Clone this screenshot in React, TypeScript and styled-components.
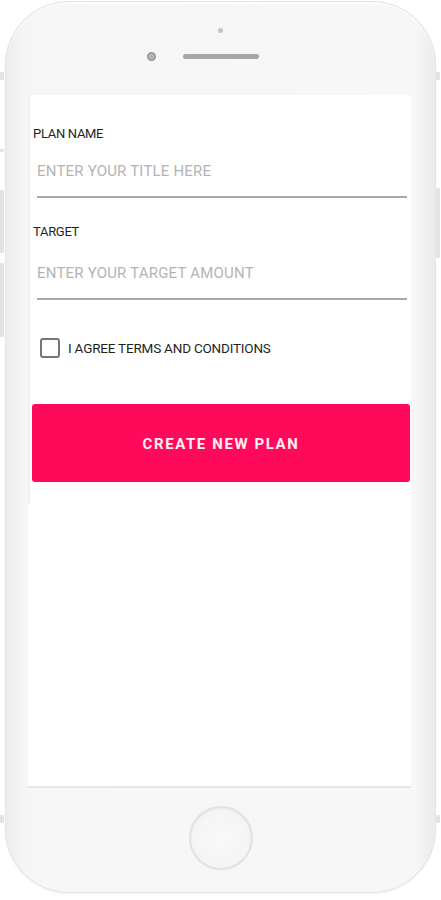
import React, { useState } from "react";
import styled, { createGlobalStyle } from "styled-components";

const GlobalStyle = createGlobalStyle`
    html, body {
        margin: 0;
        padding: 0;
        background: #ffffff;
        font-family: Roboto, "Noto Sans", "Liberation Sans", sans-serif;
    }
`;

// --- Phone frame ---
const Page = styled.div`
    width: 441px;
    height: 900px;
    padding: 1px 0 0 5px;
    box-sizing: border-box;
`;

const Phone = styled.div`
    position: relative;
    width: 431px;
    height: 892px;
    box-sizing: border-box;
    border-radius: 64px;
    background: linear-gradient(90deg, #ececec 0%, #f6f6f6 5%, #f7f7f7 95%, #eaeaea 100%);
    box-shadow: inset 0 0 0 1px #e4e4e4, inset 0 2px 3px #ffffff, 0 1px 2px rgba(0, 0, 0, 0.06);
    display: flex;
    flex-direction: column;
    align-items: center;
`;

// side buttons / antenna marks sit on the frame edge
const SideMark = styled.div<{ $side: "left" | "right"; $top: number; $h: number }>`
    position: absolute;
    ${({ $side }) => ($side === "left" ? "left: -5px;" : "right: -4px;")}
    top: ${({ $top }) => $top}px;
    width: 4px;
    height: ${({ $h }) => $h}px;
    background: #e3e3e3;
    border-radius: 1px;
`;

const TopBezel = styled.div`
    height: 94px;
    width: 100%;
    display: flex;
    flex-direction: column;
    align-items: center;
    flex-shrink: 0;
`;

const Sensor = styled.div`
    width: 5px;
    height: 5px;
    margin-top: 27px;
    border-radius: 50%;
    background: #c4c4c4;
`;

const EarRow = styled.div`
    display: flex;
    align-items: center;
    gap: 27px;
    margin-top: 19px;
    padding-right: 36px;
`;

const Camera = styled.div`
    width: 9px;
    height: 9px;
    box-sizing: border-box;
    border-radius: 50%;
    background: #a9a9a9;
    border: 2px solid #9a9a9a;
    box-shadow: inset 0 0 0 1px #c9c9c9;
`;

const Speaker = styled.div`
    width: 76px;
    height: 5px;
    border-radius: 3px;
    background: #a6a6a6;
`;

const Screen = styled.div`
    width: 383px;
    height: 693px;
    margin-left: -2px;
    background: #ffffff;
    border-bottom: 2px solid #e6e6e6;
    box-sizing: border-box;
    flex-shrink: 0;
`;

const BottomBezel = styled.div`
    flex: 1;
    display: flex;
    justify-content: center;
    padding-top: 18px;
`;

const HomeButton = styled.div`
    width: 64px;
    height: 64px;
    box-sizing: border-box;
    border-radius: 50%;
    border: 2px solid #e2e2e2;
    background: radial-gradient(circle at 50% 50%, #f9f9f9 0%, #f2f2f2 100%);
    box-shadow: inset 0 1px 2px rgba(0, 0, 0, 0.05);
`;

// --- Form ---
const Form = styled.form`
    display: flex;
    flex-direction: column;
    padding: 31px 1px 22px 2px;
    border-left: 2px solid #efefef;
`;

const Label = styled.label<{ $gap?: number }>`
    display: block;
    margin: ${({ $gap }) => $gap ?? 0}px 0 0 1px;
    font-size: 13px;
    line-height: 16px;
    color: #1f1f1f;
    letter-spacing: -0.3px;
`;

const Field = styled.input<{ $pad?: number }>`
    width: 370px;
    height: ${({ $pad }) => 56 + ($pad ?? 0)}px;
    margin-left: 5px;
    padding: ${({ $pad }) => 4 + ($pad ?? 0)}px 0 0 0;
    box-sizing: border-box;
    border: none;
    border-bottom: 2px solid #a8a8a8;
    outline: none;
    background: transparent;
    font-family: inherit;
    font-size: 15px;
    letter-spacing: 0.2px;
    color: #333;

    &::placeholder {
        color: #b4b4b4;
    }
`;

const CheckRow = styled.label`
    display: flex;
    align-items: center;
    gap: 8px;
    margin: 38px 0 0 8px;
    cursor: pointer;
`;

const Box = styled.span<{ $on: boolean }>`
    width: 20px;
    height: 20px;
    box-sizing: border-box;
    border: 2px solid #767676;
    border-radius: 3px;
    background: ${({ $on }) => ($on ? "#767676" : "transparent")};
`;

const CheckText = styled.span`
    font-size: 13.5px;
    color: #1f1f1f;
    letter-spacing: -0.2px;
`;

const CreateButton = styled.button`
    margin: 46px 0 0 0;
    width: 378px;
    height: 78px;
    padding-top: 3px;
    border: none;
    border-radius: 3px;
    background: #ff0a5a;
    color: #ffeef3;
    font-family: inherit;
    font-size: 15px;
    font-weight: 700;
    letter-spacing: 1.6px;
    cursor: pointer;
`;

export default function App() {
    const [agree, setAgree] = useState(false);

    return (
        <>
            <GlobalStyle />
            <Page>
                <Phone>
                    <SideMark $side="left" $top={71} $h={8} />
                    <SideMark $side="right" $top={71} $h={8} />
                    <SideMark $side="left" $top={148} $h={3} />
                    <SideMark $side="left" $top={189} $h={63} />
                    <SideMark $side="left" $top={262} $h={74} />
                    <SideMark $side="right" $top={187} $h={70} />
                    <SideMark $side="left" $top={814} $h={8} />
                    <SideMark $side="right" $top={814} $h={8} />

                    <TopBezel>
                        <Sensor />
                        <EarRow>
                            <Camera />
                            <Speaker />
                        </EarRow>
                    </TopBezel>

                    <Screen>
                        <Form onSubmit={(e) => e.preventDefault()}>
                            <Label>PLAN NAME</Label>
                            <Field placeholder="ENTER YOUR TITLE HERE" />
                            <Label $gap={26}>TARGET</Label>
                            <Field $pad={4} placeholder="ENTER YOUR TARGET AMOUNT" />
                            <CheckRow onClick={() => setAgree(!agree)}>
                                <Box $on={agree} />
                                <CheckText>I AGREE TERMS AND CONDITIONS</CheckText>
                            </CheckRow>
                            <CreateButton type="submit">CREATE NEW PLAN</CreateButton>
                        </Form>
                    </Screen>

                    <BottomBezel>
                        <HomeButton />
                    </BottomBezel>
                </Phone>
            </Page>
        </>
    );
}
